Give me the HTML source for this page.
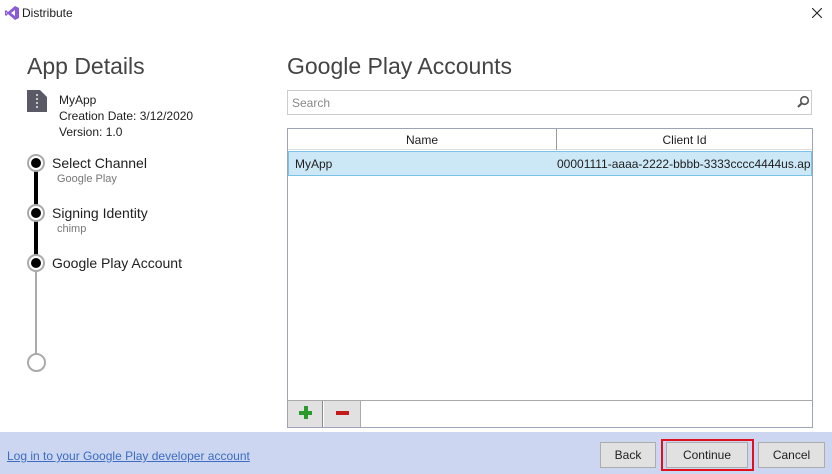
<!DOCTYPE html>
<html><head><meta charset="utf-8"><style>
*{margin:0;padding:0;box-sizing:border-box}
body{width:832px;height:474px;background:#fff;font-family:"Liberation Sans",sans-serif;color:#1e1e1e;position:relative;overflow:hidden}
.a{position:absolute;white-space:nowrap}
.btn{position:absolute;top:442px;height:26px;background:#e1e1e1;border:1px solid #adadad;font-size:12px;text-align:center;line-height:24px;color:#1e1e1e}
</style></head><body>
<svg class="a" style="left:4px;top:5px" width="16" height="16" viewBox="0 0 16 16"><path d="M11 1 L15 3 V13 L11 15 L4 9 L2 11 L1 10 V6 L2 5 L4 7 Z M11 5 L7 8 L11 11 Z M2 7 V9 L3 8 Z" fill="#8a5bd6"/></svg>
<div class="a" style="left:22px;top:6px;font-size:12px">Distribute</div>
<svg class="a" style="left:812px;top:8px" width="10" height="10" viewBox="0 0 10 10"><path d="M0 0L10 10M10 0L0 10" stroke="#222" stroke-width="1.1"/></svg>

<div class="a" style="left:27px;top:53px;font-size:23px;color:#444">App Details</div>
<svg class="a" style="left:27px;top:90px" width="20" height="22" viewBox="0 0 20 22"><path d="M0 0H13L20 7V22H0Z" fill="#5a5a66"/><path d="M9 4h2v2H9zM9 8h2v2H9zM9 12h2v2H9zM9 16h2v2H9z" fill="#c8c8c8"/></svg>
<div class="a" style="left:59px;top:92px;font-size:12px;line-height:16px">MyApp<br>Creation Date: 3/12/2020<br>Version: 1.0</div>

<div class="a" style="left:34px;top:163px;width:4px;height:100px;background:#000"></div>
<div class="a" style="left:35px;top:263px;width:2px;height:92px;background:#aaa"></div>
<div class="a" style="left:27px;top:154px;width:18px;height:18px;border:2px solid #aaa;border-radius:50%;background:#fff"></div>
<div class="a" style="left:31px;top:158px;width:10px;height:10px;border-radius:50%;background:#000"></div>
<div class="a" style="left:27px;top:204px;width:18px;height:18px;border:2px solid #aaa;border-radius:50%;background:#fff"></div>
<div class="a" style="left:31px;top:208px;width:10px;height:10px;border-radius:50%;background:#000"></div>
<div class="a" style="left:27px;top:254px;width:18px;height:18px;border:2px solid #aaa;border-radius:50%;background:#fff"></div>
<div class="a" style="left:31px;top:258px;width:10px;height:10px;border-radius:50%;background:#000"></div>
<div class="a" style="left:27px;top:353px;width:19px;height:19px;border:2px solid #aaa;border-radius:50%;background:#fff"></div>

<div class="a" style="left:52px;top:155px;font-size:14px">Select Channel</div>
<div class="a" style="left:57px;top:173px;font-size:11px;color:#777">Google Play</div>
<div class="a" style="left:52px;top:205px;font-size:14px">Signing Identity</div>
<div class="a" style="left:57px;top:223px;font-size:11px;color:#777">chimp</div>
<div class="a" style="left:52px;top:255px;font-size:14px">Google Play Account</div>

<div class="a" style="left:287px;top:53px;font-size:23px;color:#444">Google Play Accounts</div>
<div class="a" style="left:287px;top:90px;width:525px;height:25px;border:1px solid #ccc"></div>
<div class="a" style="left:292px;top:96px;font-size:12px;color:#888">Search</div>
<svg class="a" style="left:796px;top:95px" width="14" height="14" viewBox="0 0 14 14"><circle cx="8.5" cy="5.5" r="3.8" fill="none" stroke="#555" stroke-width="1.6"/><path d="M6 8L2 12" stroke="#555" stroke-width="2"/></svg>

<div class="a" style="left:287px;top:128px;width:526px;height:300px;border:1px solid #9da3b8"></div>
<div class="a" style="left:288px;top:129px;width:524px;height:21px;border-bottom:1px solid #ddd"></div>
<div class="a" style="left:556px;top:129px;width:1px;height:21px;background:#999"></div>
<div class="a" style="left:288px;top:133px;width:268px;text-align:center;font-size:12px">Name</div>
<div class="a" style="left:557px;top:133px;width:255px;text-align:center;font-size:12px">Client Id</div>
<div class="a" style="left:288px;top:151px;width:524px;height:25px;background:#cce8f7;border:1px solid #7ac2e6"></div>
<div class="a" style="left:295px;top:157px;font-size:12px">MyApp</div>
<div class="a" style="left:557px;top:157px;font-size:12px;width:254px;overflow:hidden">00001111-aaaa-2222-bbbb-3333cccc4444us.ap</div>

<div class="a" style="left:288px;top:400px;width:524px;height:1px;background:#aaa"></div>
<div class="a" style="left:288px;top:401px;width:35px;height:26px;background:#e1e1e1;border-right:1px solid #888"></div>
<div class="a" style="left:324px;top:401px;width:37px;height:26px;background:#e1e1e1;border-right:1px solid #aaa"></div>
<div class="a" style="left:299px;top:406px;width:13px;height:13px;background:linear-gradient(#2a9a2a,#2a9a2a) center/4px 13px no-repeat,linear-gradient(#2a9a2a,#2a9a2a) center/13px 4px no-repeat"></div>
<div class="a" style="left:336px;top:411px;width:13px;height:4px;background:#c41a1a"></div>

<div class="a" style="left:0;top:432px;width:832px;height:42px;background:#ccd6f0"></div>
<div class="a" style="left:7px;top:449px;font-size:12px;color:#3d6cc0;text-decoration:underline">Log in to your Google Play developer account</div>
<div class="btn" style="left:600px;width:56px">Back</div>
<div class="a" style="left:661px;top:439px;width:93px;height:32px;border:2px solid #e0101c"></div>
<div class="btn" style="left:666px;width:82px">Continue</div>
<div class="btn" style="left:758px;width:67px">Cancel</div>
</body></html>
